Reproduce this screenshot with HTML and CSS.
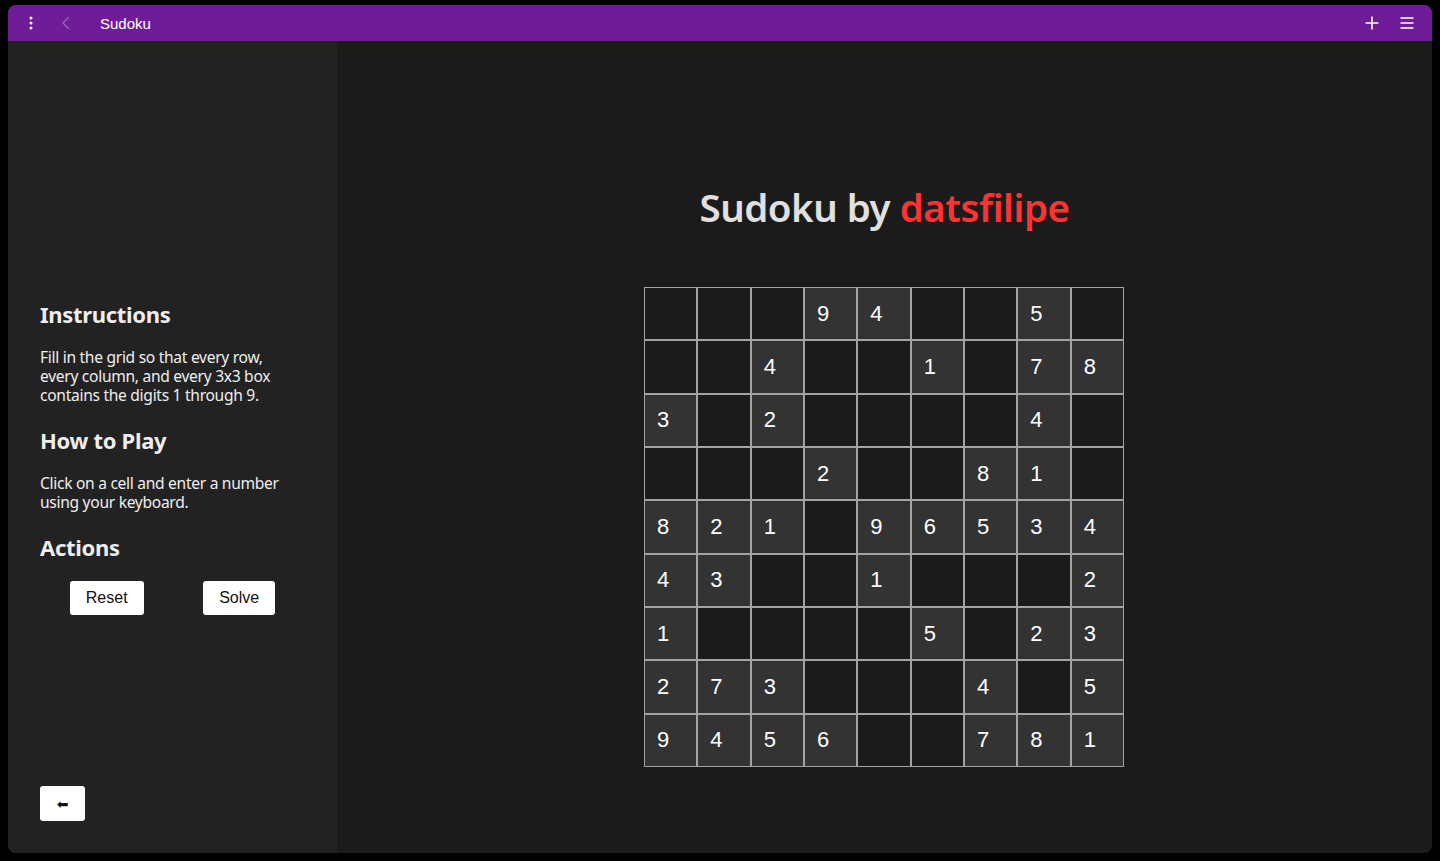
FILE: index.html
```html
<!DOCTYPE html>
<html>
<head>
<meta charset="utf-8">
<title>Sudoku</title>
<link rel="stylesheet" href="styles.css">
</head>
<body>
<div class="window">
  <header class="titlebar">
    <div class="tb-left">
      <span class="tb-icon">
        <svg width="4" height="14" viewBox="0 0 4 14"><circle cx="2" cy="2" r="1.5" fill="#fff"/><circle cx="2" cy="7" r="1.5" fill="#fff"/><circle cx="2" cy="12" r="1.5" fill="#fff"/></svg>
      </span>
      <span class="tb-icon back">
        <svg width="10" height="14" viewBox="0 0 10 14"><path d="M8 1 L2 7 L8 13" fill="none" stroke="#9866b8" stroke-width="1.4"/></svg>
      </span>
      <span class="tb-title">Sudoku</span>
    </div>
    <div class="tb-right">
      <span class="tb-icon">
        <svg width="14" height="14" viewBox="0 0 14 14"><path d="M7 0.5 V13.5 M0.5 7 H13.5" stroke="#fff" stroke-width="1.6"/></svg>
      </span>
      <span class="tb-icon">
        <svg width="14" height="12" viewBox="0 0 14 12"><path d="M0.5 1 H13.5 M0.5 6 H13.5 M0.5 11 H13.5" stroke="#fff" stroke-width="1.6"/></svg>
      </span>
    </div>
  </header>
  <div class="body">
    <aside class="sidebar">
      <div class="side-content">
        <h2>Instructions</h2>
        <p>Fill in the grid so that every row, every column, and every 3x3 box contains the digits 1 through 9.</p>
        <h2>How to Play</h2>
        <p>Click on a cell and enter a number using your keyboard.</p>
        <h2>Actions</h2>
        <div class="actions">
          <button class="btn">Reset</button>
          <button class="btn">Solve</button>
        </div>
      </div>
      <button class="btn back-btn">&#x2B05;</button>
    </aside>
    <main class="main">
      <h1 class="title">Sudoku by <span class="accent">datsfilipe</span></h1>
      <div class="grid" id="grid"></div>
    </main>
  </div>
</div>
<script>
const rows = [
  "___94__5_",
  "__4__1_78",
  "3_2____4_",
  "___2__81_",
  "821_96534",
  "43__1___2",
  "1____5_23",
  "273___4_5",
  "9456__781"
];
const g = document.getElementById('grid');
rows.forEach(r => {
  for (const ch of r) {
    const d = document.createElement('div');
    d.className = 'cell' + (ch === '_' ? '' : ' filled');
    d.textContent = ch === '_' ? '' : ch;
    g.appendChild(d);
  }
});
</script>
</body>
</html>
```
FILE: styles.css
```css
* { box-sizing: border-box; }
html, body { margin: 0; padding: 0; }
body {
  background: #000;
  width: 1440px;
  height: 861px;
  padding: 5px 8px 8px 8px;
  overflow: hidden;
}
.window {
  height: 848px;
  border-radius: 8px;
  overflow: hidden;
  display: flex;
  flex-direction: column;
  background: #1b1b1b;
}
.titlebar {
  height: 36px;
  background: #6f1c99;
  display: flex;
  align-items: center;
  justify-content: space-between;
  font-family: "Liberation Sans", Arial, sans-serif;
  color: #fff;
}
.tb-left, .tb-right { display: flex; align-items: center; }
.tb-left { padding-left: 16px; }
.tb-right { padding-right: 18px; gap: 21px; }
.tb-icon { display: flex; align-items: center; justify-content: center; width: 14px; height: 14px; }
.tb-icon.back { margin-left: 21px; }
.tb-title { margin-left: 27px; font-size: 15px; }
.body { flex: 1; display: flex; min-height: 0; }
.sidebar {
  width: 329px;
  background: #222;
  display: flex;
  flex-direction: column;
  justify-content: space-between;
  padding: 257px 32px 32px 32px;
  font-family: "Noto Sans", sans-serif;
  color: #eee;
}
.sidebar h2 {
  margin: 0;
  font-size: 22px;
  font-weight: 700;
  line-height: 32px;
  letter-spacing: -0.3px;
}
.sidebar p {
  margin: 18px 0 19px;
  max-width: 245px;
  font-size: 15.6px;
  line-height: 19px;
  letter-spacing: -0.3px;
}
.actions {
  display: flex;
  justify-content: space-around;
  margin-top: 18px;
}
.btn {
  background: #fff;
  border: none;
  border-radius: 3px;
  font-family: "Liberation Sans", Arial, sans-serif;
  font-size: 16px;
  color: #111;
  height: 34px;
  padding: 0 16px;
}
.back-btn {
  width: 45px;
  height: 35px;
  padding: 0;
  font-size: 14px;
  align-self: flex-start;
  font-family: "DejaVu Sans", sans-serif;
}
.main {
  flex: 1;
  display: flex;
  flex-direction: column;
  align-items: center;
  padding-top: 138px;
}
.title {
  margin: 0 0 52px;
  font-family: "Noto Sans", sans-serif;
  font-weight: 600;
  font-size: 38.5px;
  line-height: 56px;
  color: #e0e0e0;
  letter-spacing: -0.5px;
}
.accent { color: #ff3333; }
.grid {
  width: 480px;
  height: 480px;
  display: grid;
  grid-template-columns: repeat(9, 1fr);
  grid-template-rows: repeat(9, 1fr);
  margin-right: 1px;
}
.cell {
  border: 1px solid #a3a3a3;
  background: #1b1b1b;
  color: #fff;
  font-family: "Liberation Sans", Arial, sans-serif;
  font-size: 22px;
  display: flex;
  align-items: center;
  padding-left: 12px;
}
.cell.filled { background: #333; }
```
